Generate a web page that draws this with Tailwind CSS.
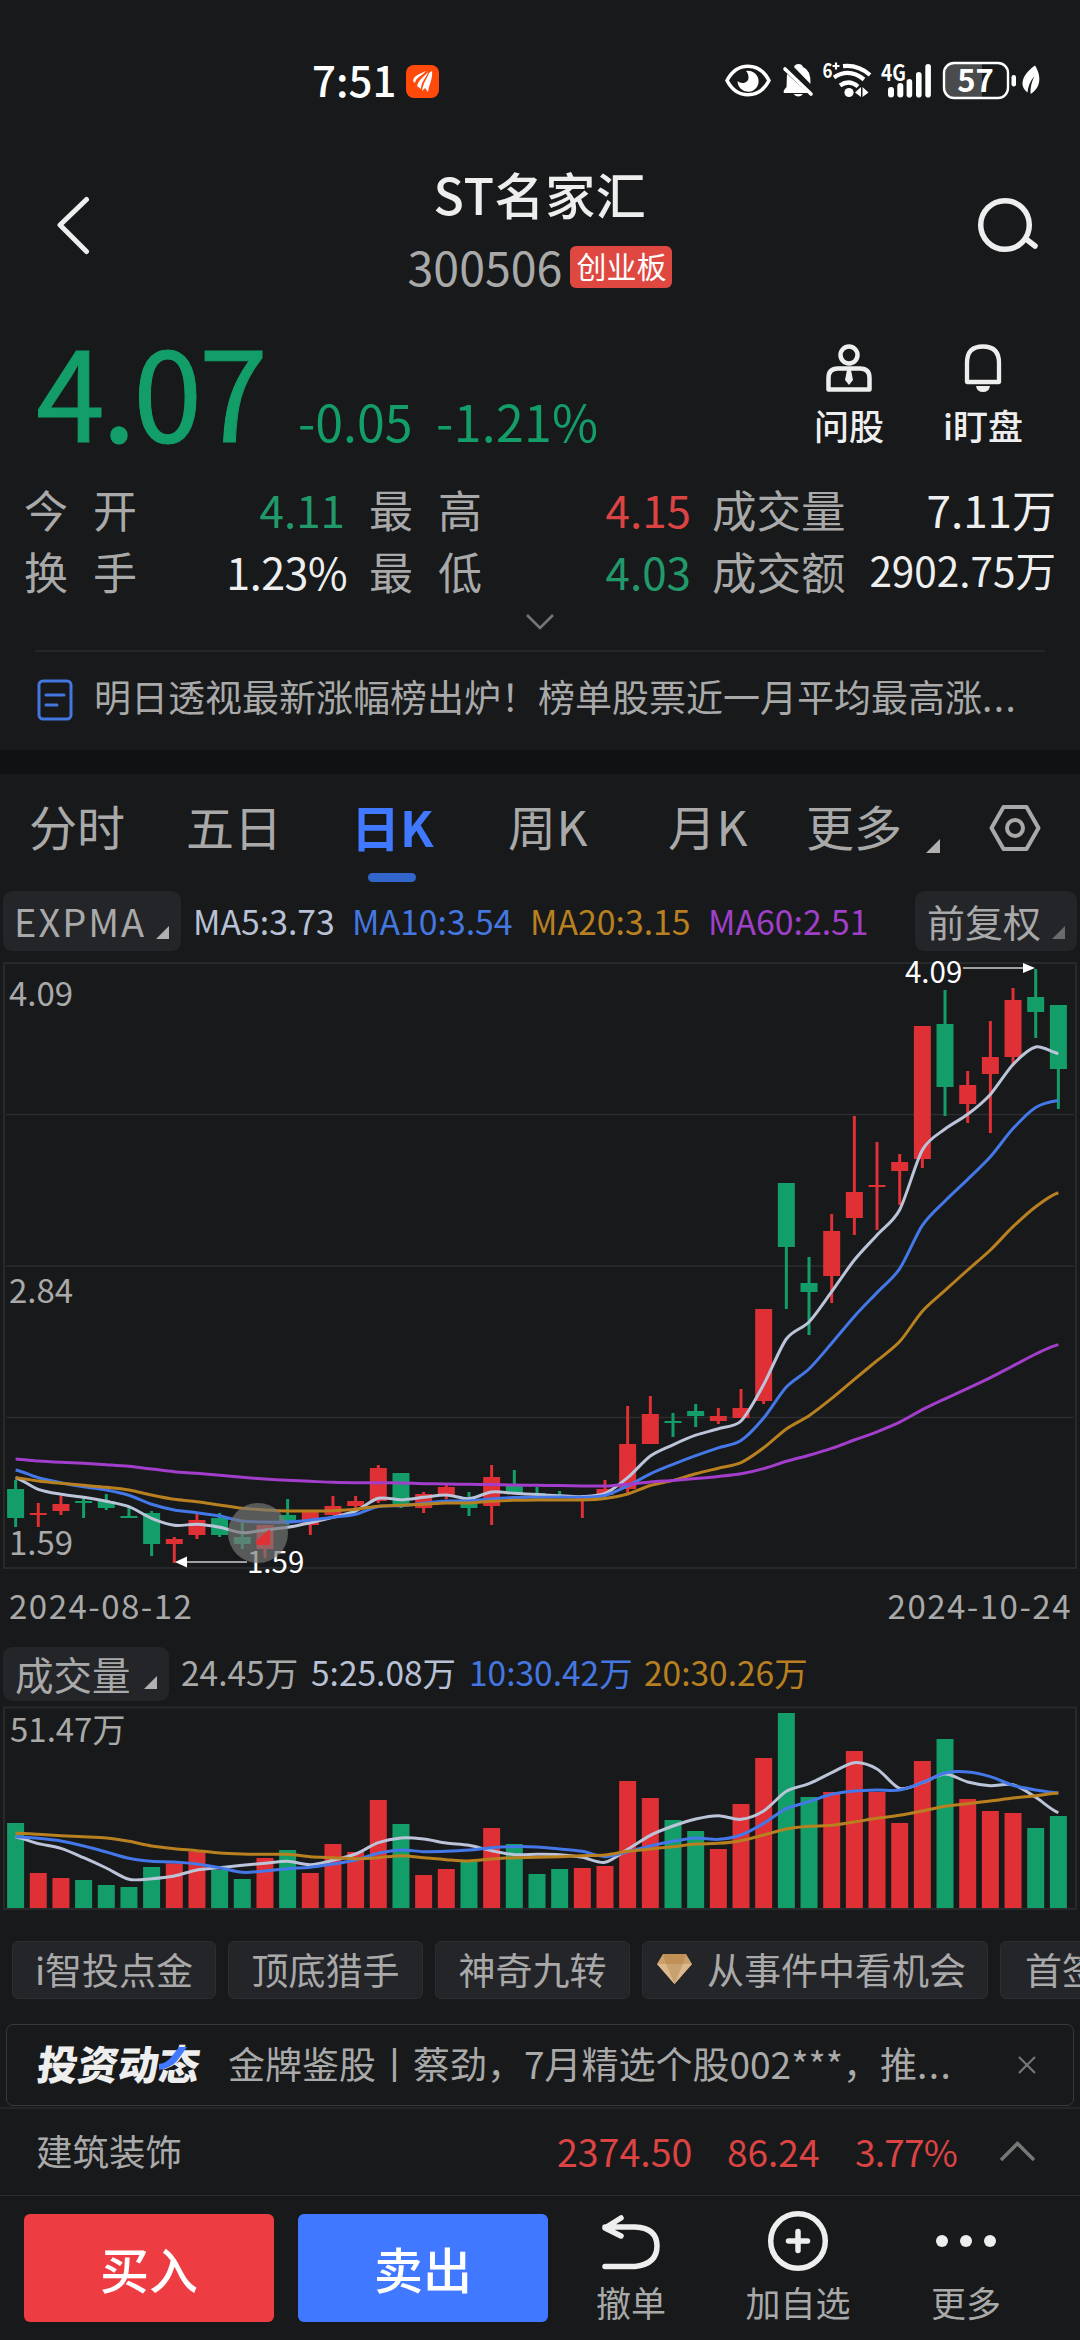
<!DOCTYPE html>
<html lang="zh-CN">
<head>
    <meta charset="UTF-8">
    <meta name="viewport" content="width=device-width, initial-scale=1.0">
    <title>ST名家汇 300506</title>
    <script src="https://cdn.jsdelivr.net/npm/@tailwindcss/browser@4"></script>
</head>
<body class="w-[1080px] h-[2340px] overflow-hidden flex flex-col bg-[#17191a] text-[#a9a9a9] font-['Noto_Sans_CJK_SC',sans-serif] whitespace-nowrap">
    <!-- 状态栏 -->
    <div class="h-[162px] shrink-0 flex items-center pl-[312px] pr-[35px] text-white">
        <span class="text-[42px] font-medium mb-[6px] w-[94px]">7:51</span>
        <svg class="w-[33px] h-[33px]" viewBox="0 0 33 33">
            <rect width="33" height="33" rx="8" fill="#ff4a0c"/>
            <path d="M7 16C8 10 14 9 20 6C16 11 10 12 9 18ZM11 21C13 14 18 12 22 7C20 14 15 16 15 24ZM16 26C17 18 21 14 23 8L26 6C27 14 23 19 22 27L19 23Z" fill="#fff"/>
        </svg>
        <svg class="w-[320px] h-[62px] ml-auto" viewBox="25 0 320 62" fill="#fff">
            <path d="M27 30.5C37 11.5 59 11.5 69 30.5C59 49.500 37 49.500 27 30.5Z" fill="none" stroke="#fff" stroke-width="3.6" stroke-linejoin="round"/>
            <path d="M46 21A10.500 10.500 0 1 1 37.600 31C40 34 48 34 48.500 28C48.500 25 48 23 46 21Z"/>
            <path d="M87 24L108 43H84Q82.500 41 86.500 37Z M94 17Q95 14 98.500 14T103 17Q111 20 110.500 34Z M93.500 44H103Q98.500 49 93.500 44Z"/>
            <path d="M85 19L111 44" stroke="#fff" stroke-width="3.600" stroke-linecap="round"/>
            <text x="122.500" y="27.500" font-size="20" font-weight="700" textLength="10" lengthAdjust="spacingAndGlyphs">6</text>
            <path d="M132.500 16H139.500M136 12.500V19.500" stroke="#fff" stroke-width="2.200"/>
            <g fill="none" stroke="#fff" stroke-width="4.200">
                <path d="M143 16.200Q158 14.500 170 25"/>
                <path d="M134 27.500Q149 17.500 164 29.500"/>
                <path d="M140 35.500Q149 29 158 36.500"/>
            </g>
            <circle cx="149" cy="42.500" r="4.600"/>
            <path d="M155 42.500L161 37V47ZM168.500 42.500L162.500 37V47Z"/>
            <text x="181" y="30.500" font-size="22" font-weight="700" textLength="25" lengthAdjust="spacingAndGlyphs">4G</text>
            <rect x="188" y="37" width="6" height="10.500" rx="3"/>
            <rect x="197.300" y="33" width="6" height="14.500" rx="3"/>
            <rect x="206.600" y="29" width="5.600" height="18.500" rx="2.800"/>
            <rect x="216" y="22" width="5.600" height="25.500" rx="2.800"/>
            <rect x="225.300" y="14" width="5.600" height="33.500" rx="2.800"/>
            <path d="M254 13H282V48H254Q244 48 244 38V23Q244 13 254 13Z" fill="#4a4b4d"/>
            <rect x="244" y="13" width="64" height="35" rx="10" fill="none" stroke="#fff" stroke-width="2.400"/>
            <text x="275.500" y="42" font-size="31" font-weight="700" text-anchor="middle">57</text>
            <rect x="311.500" y="25" width="4.500" height="11.500" rx="2.200"/>
            <path d="M335 15.500C341 25 342 37 330.500 44C330 37 332 31 334.500 26C330 31 328 37 327.500 42.500C318 35 323 24 335 15.500Z"/>
        </svg>
    </div>

    <!-- 标题 -->
    <div class="h-[126px] shrink-0 relative flex justify-center">
        <svg class="absolute left-[54px] top-[33px] w-[40px] h-[60px]" viewBox="0 0 40 60" fill="none" stroke="#eee" stroke-width="5" stroke-linecap="round" stroke-linejoin="round"><path d="M32.500 4.500L6 30L32.500 56.500"/></svg>
        <div class="flex flex-col items-center">
            <div class="h-[60px] leading-[62px] text-[50px] tracking-[0.600px] font-medium text-[#eee]">ST名家汇</div>
            <div class="mt-[21px] h-[45px] flex items-center gap-[8px]">
                <span class="text-[46.500px] leading-[45px]">300506</span>
                <span class="mt-[3px] w-[102px] h-[42px] leading-[38px] rounded-[6px] bg-[#df4741] text-white text-[30px] text-center">创业板</span>
            </div>
        </div>
        <svg class="absolute left-[974px] top-[33px] w-[66px] h-[60px]" viewBox="974 195 66 60" fill="none" stroke="#eee" stroke-width="5.500" stroke-linecap="round"><circle cx="1005" cy="225" r="24.300"/><path d="M1026 239L1035 246"/></svg>
    </div>

    <!-- 最新价 -->
    <div class="h-[190px] shrink-0 flex justify-between pl-[36px] pr-[51px] text-[#139e69]">
        <div class="flex items-baseline pt-[38px]">
            <span class="text-[124px] leading-[124px] tracking-[-3px] w-[262px] [-webkit-text-stroke:1px_#139e69]">4.07</span>
            <span class="text-[50px] w-[138px]">-0.05</span>
            <span class="text-[50px] tracking-[0.300px]">-1.21%</span>
        </div>
        <div class="flex text-[#eee] text-[35px] font-medium pt-[54px]">
            <div class="w-[92px] flex flex-col items-center">
                <svg class="w-[50px] h-[52px]" viewBox="0 0 50 52" fill="none" stroke="#eee" stroke-width="4.500" stroke-linejoin="round">
                    <circle cx="25" cy="13" r="8.500"/>
                    <path d="M4.500 47.500V36Q4.500 26.500 14 26.500H36Q45.500 26.500 45.500 36V47.500Z"/>
                    <path d="M23 28H27L29 38L25 43L21 38Z" fill="#eee" stroke="none"/>
                </svg>
                <span class="leading-[36px] mt-[13px]">问股</span>
            </div>
            <div class="w-[92px] ml-[42px] flex flex-col items-center">
                <svg class="w-[50px] h-[52px]" viewBox="0 0 50 52" fill="none" stroke="#eee" stroke-width="4.300" stroke-linejoin="round">
                    <path d="M9 40V21Q9 4.500 25 4.500T41 21V40Z"/>
                    <path d="M18 44H32Q31 50 25 50T18 44Z" fill="#eee" stroke="none"/>
                </svg>
                <span class="leading-[36px] mt-[13px]">i盯盘</span>
            </div>
        </div>
    </div>

    <!-- 行情数据 -->
    <div class="h-[122px] shrink-0 grid grid-cols-[113px_208px_24px_113px_209px_21px_136px_208px] pl-[24px] text-[44px] leading-[62px]">
        <span class="flex justify-between"><i class="not-italic">今</i><i class="not-italic">开</i></span>
        <span class="text-right text-[#22996b]">4.11</span>
        <span></span>
        <span class="flex justify-between"><i class="not-italic">最</i><i class="not-italic">高</i></span>
        <span class="text-right text-[#dc4444]">4.15</span>
        <span></span>
        <span class="text-[44.500px]">成交量</span>
        <span class="text-right text-[#eee]">7.11万</span>
        <span class="flex justify-between"><i class="not-italic">换</i><i class="not-italic">手</i></span>
        <span class="text-right text-[#eee] text-[43px] tracking-[-0.500px] -mr-[2px]">1.23%</span>
        <span></span>
        <span class="flex justify-between"><i class="not-italic">最</i><i class="not-italic">低</i></span>
        <span class="text-right text-[#22996b]">4.03</span>
        <span></span>
        <span class="text-[44.500px]">成交额</span>
        <span class="text-right text-[#eee] text-[40.500px] leading-[59px]">2902.75万</span>
    </div>
    <div class="h-[50px] shrink-0 flex justify-center pt-[13px]">
        <svg class="w-[30px] h-[18px]" viewBox="0 0 30 18" fill="none" stroke="#777" stroke-width="2.600"><path d="M2 2L15 15L28 2"/></svg>
    </div>

    <!-- 资讯 -->
    <div class="h-[100px] shrink-0 mx-[35px] border-t-2 border-[#242627] flex items-center">
        <svg class="ml-[2px] mb-[2px] w-[36px] h-[42px]" viewBox="0 0 36 42" fill="none" stroke="#4577e0" stroke-width="3"><rect x="2" y="2" width="32" height="38" rx="4"/><path d="M9 16H27M9 26H20" stroke-linecap="round"/></svg>
        <span class="ml-[21px] mb-[9px] text-[37px]">明日透视最新涨幅榜出炉！榜单股票近一月平均最高涨<span class="tracking-[1.500px]">...</span></span>
    </div>
    <div class="h-[24px] shrink-0 bg-[#101113]"></div>

    <!-- 周期切换 -->
    <div class="h-[117px] shrink-0 relative flex pl-[29px] text-[48px] leading-[103px]">
        <span class="w-[157px]">分时</span>
        <span class="w-[165px]">五日</span>
        <span class="w-[157px] font-bold text-[#4078ff] text-[49px]">日K</span>
        <span class="w-[160px] tracking-[0.500px]">周K</span>
        <span class="w-[138px] tracking-[0.500px]">月K</span>
        <span class="w-[120px]">更多</span>
        <svg class="mt-[65px] w-[14px] h-[14px]" viewBox="0 0 14 14" fill="#b0b0b0"><path d="M14 0V14H0Z"/></svg>
        <svg class="ml-[49px] mt-[30px] w-[52px] h-[48px]" viewBox="0 0 52 48" fill="none" stroke="#a9a9a9" stroke-width="4" stroke-linejoin="round"><path d="M14.500 3H37.500L49.500 24L37.500 45H14.500L2.500 24Z"/><circle cx="26" cy="24" r="8"/></svg>
        <i class="absolute left-[368px] top-[99px] w-[48px] h-[9px] rounded-full bg-[#3266cc]"></i>
    </div>

    <!-- 均线 -->
    <div class="h-[60px] shrink-0 flex pl-[3px] pr-[3px] text-[33.800px] leading-[59px]">
        <div class="w-[178px] rounded-[9px] bg-[#242529] flex pl-[11px] text-[38px]">
            <span class="w-[142px] tracking-[2px]">EXPMA</span>
            <svg class="mt-[35px] w-[13px] h-[13px]" viewBox="0 0 14 14" fill="#b0b0b0"><path d="M14 0V14H0Z"/></svg>
        </div>
        <span class="ml-[12px] w-[159px] text-[#b9c1d6]">MA5:3.73</span>
        <span class="w-[178px] text-[#4577e0]">MA10:3.54</span>
        <span class="w-[178px] text-[#b98021]">MA20:3.15</span>
        <span class="text-[#a040c8]">MA60:2.51</span>
        <div class="ml-auto w-[162px] rounded-[9px] bg-[#242529] flex pl-[12px] text-[38px]">
            <span class="w-[125px]">前复权</span>
            <svg class="mt-[35px] w-[13px] h-[13px]" viewBox="0 0 14 14" fill="#6b6b6d"><path d="M14 0V14H0Z"/></svg>
        </div>
    </div>

    <!-- K线图 -->
    <svg id="kline" class="w-[1080px] h-[629px] shrink-0" viewBox="0 951 1080 629" fill="none">
        <g stroke="#28292b" stroke-width="2">
            <rect x="4" y="963" width="1072" height="605"/>
            <path d="M6 1114.500H1074M6 1266H1074M6 1417.500H1074" stroke-width="1.500" stroke="#2c2d2f"/>
        </g>
        <g id="candles"></g>
        <g fill="#a9a9a9" font-size="33">
            <text x="9" y="1005.500">4.09</text>
            <text x="9" y="1303">2.84</text>
            <text x="9" y="1554.500">1.59</text>
        </g>
        <g id="maLines" stroke-width="3" stroke-linejoin="round"></g>
        <path d="M963 968H1025M184 1562H247" stroke="#a0a0a0" stroke-width="2"/>
        <path d="M1035 968L1023 963V973ZM175 1562L187 1556.500V1567.500Z" fill="#fff"/>
        <text x="905" y="982.500" font-size="29.500" fill="#fff">4.09</text>
        <text x="247" y="1573" font-size="29.500" fill="#fff">1.59</text>
        <circle cx="258" cy="1533" r="30" fill="#777" fill-opacity=".68"/>
        <path d="M256 1544V1541L270 1529V1545H258Z" fill="#df3035"/>
    </svg>
    <div class="h-[67px] shrink-0 flex justify-between pl-[9px] pr-[8px] text-[33px] leading-[51px] tracking-[1.500px]">
        <span>2024-08-12</span>
        <span>2024-10-24</span>
    </div>

    <!-- 成交量 -->
    <div class="h-[54px] shrink-0 flex pl-[3px] text-[33.500px] leading-[50px]">
        <div class="w-[166px] rounded-[9px] bg-[#242529] flex pl-[12px] text-[38.500px] leading-[52px]">
            <span class="w-[129px]">成交量</span>
            <svg class="mt-[29px] w-[13px] h-[13px]" viewBox="0 0 14 14" fill="#b0b0b0"><path d="M14 0V14H0Z"/></svg>
        </div>
        <span class="ml-[12px] w-[130px]">24.45万</span>
        <span class="w-[158px] text-[#b9c1d6]">5:25.08万</span>
        <span class="w-[175px] text-[#4577e0]">10:30.42万</span>
        <span class="text-[#b98021]">20:30.26万</span>
    </div>
    <svg id="volume" class="w-[1080px] h-[240px] shrink-0" viewBox="0 1701 1080 240" fill="none">
        <rect x="4" y="1707.500" width="1072" height="201.500" stroke="#28292b" stroke-width="2"/>
        <g id="volBars"></g>
        <text x="10" y="1741.500" font-size="33" fill="#a9a9a9">51.47万</text>
        <g id="volLines" stroke-width="3" stroke-linejoin="round"></g>
    </svg>

    <!-- 功能标签 -->
    <div class="h-[58px] w-[1080px] overflow-hidden shrink-0 flex gap-[12px] pl-[12px] text-[37px] leading-[54px]">
        <span class="w-[204px] shrink-0 h-[58px] rounded-[6px] bg-[#242529] border border-[#2c2d30] text-center">i智投点金</span>
        <span class="w-[195px] shrink-0 h-[58px] rounded-[6px] bg-[#242529] border border-[#2c2d30] text-center">顶底猎手</span>
        <span class="w-[195px] shrink-0 h-[58px] rounded-[6px] bg-[#242529] border border-[#2c2d30] text-center">神奇九转</span>
        <span class="w-[346px] shrink-0 h-[58px] rounded-[6px] bg-[#242529] border border-[#2c2d30] flex pl-[14px]">
            <svg class="mt-[12px] mr-[15px] w-[35px] h-[30px]" viewBox="0 0 35 30"><path d="M6 0H29L35 10L17.500 30L0 10Z" fill="#c9a06e"/><path d="M0 10H35L17.500 30Z" fill="#dcb98c"/><path d="M9 10H26L17.500 30Z" fill="#c8a170"/><path d="M6 0H29L26 10H9Z" fill="#c19057"/></svg>
            <span>从事件中看机会</span>
        </span>
        <span class="w-[195px] shrink-0 h-[58px] rounded-[6px] bg-[#242529] border border-[#2c2d30] pl-[24px]">首签</span>
    </div>

    <!-- 投资动态 -->
    <div class="h-[82px] shrink-0 mt-[25px] mx-[6px] rounded-[7px] border border-[#38393b] flex text-[37px] leading-[76px]">
        <div class="relative w-[190px] ml-[31px]">
            <span class="inline-block -skew-x-8 text-[40.500px] leading-[76px] font-black text-[#eee]">投资动态</span>
            <svg class="absolute left-[121px] top-[22px] w-[28px] h-[24px]" viewBox="0 0 28 24"><path d="M20 0H28L18 14Q12 21 0 23V17Q8 16 13 9Z" fill="#4078ff"/></svg>
        </div>
        <span class="w-[790px]">金牌鉴股丨蔡劲，7月精选个股002***，推<span class="tracking-[1.500px]">...</span></span>
        <svg class="mt-[31px] w-[18px] h-[18px]" viewBox="0 0 18 18" stroke="#777" stroke-width="2.200"><path d="M1 1L17 17M17 1L1 17"/></svg>
    </div>

    <!-- 板块 -->
    <div class="h-[88px] shrink-0 mt-px border-t-2 border-[#242627] flex pl-[36px] text-[36.500px] leading-[84px]">
        <span class="w-[521px]">建筑装饰</span>
        <span class="w-[170px] text-[37.500px] text-[#dc4444]">2374.50</span>
        <span class="w-[128px] text-[37px] text-[#dc4444]">86.24</span>
        <span class="w-[144px] text-[37px] tracking-[-0.800px] text-[#dc4444]">3.77%</span>
        <svg class="mt-[31px] w-[37px] h-[22px]" viewBox="0 0 37 22" fill="none" stroke="#777" stroke-width="3.500"><path d="M2 20L18.500 3.500L35 20"/></svg>
    </div>

    <!-- 底部操作 -->
    <div class="h-[145px] shrink-0 border-t border-[#2a2b2d] flex pl-[24px] pt-[18px] text-[35px]">
        <button class="w-[250px] h-[108px] rounded-[6px] bg-[#ee3d42] text-white text-[49px] leading-[102px] font-medium">买入</button>
        <button class="ml-[24px] w-[250px] h-[108px] rounded-[6px] bg-[#4078ff] text-white text-[49px] leading-[102px] font-medium">卖出</button>
        <div class="ml-[30px] w-[106px] flex flex-col items-center">
            <svg class="w-[64px] h-[62px]" viewBox="0 0 64 62" fill="none" stroke="#eee" stroke-width="5.500" stroke-linecap="round" stroke-linejoin="round"><path d="M22 4L6 14L22 22M6 13H36Q58 14 58 32T36 52.500H6"/></svg>
            <span class="leading-[52px]">撤单</span>
        </div>
        <div class="ml-[60px] w-[108px] flex flex-col items-center">
            <svg class="w-[64px] h-[62px] mt-[-4px]" viewBox="0 0 64 62" fill="none" stroke="#eee" stroke-width="5.500" stroke-linecap="round"><circle cx="32" cy="31" r="27.300"/><path d="M22.500 31H41.500M32 21.500V40.500"/></svg>
            <span class="leading-[52px] mt-[4px]">加自选</span>
        </div>
        <div class="ml-[60px] w-[108px] flex flex-col items-center">
            <svg class="w-[64px] h-[62px]" viewBox="0 0 64 62" fill="#eee"><circle cx="8" cy="27" r="6"/><circle cx="32" cy="27" r="6"/><circle cx="56" cy="27" r="6"/></svg>
            <span class="leading-[52px]">更多</span>
        </div>
    </div>

    <script>
        const RED = "#df3035";
        const GREEN = "#139e69";
        const STEP = 22.669;
        const START = 15.6;
        const x = i => START + i * STEP;

        // [涨跌, 实体上, 实体下, 影线上, 影线下, 量柱上]
        const bars = [
            [0, 1489, 1518, 1480, 1527, 549], [1, 1513, 1515, 1503, 1527, 699], [1, 1504, 1511, 1496, 1515, 714],
            [0, 1501, 1503, 1497, 1518, 720], [0, 1501, 1508, 1494, 1510, 735], [0, 1516, 1518, 1506, 1518, 741],
            [0, 1513, 1544, 1511, 1556, 681], [1, 1539, 1544, 1537, 1563, 670], [1, 1520, 1535, 1514, 1539, 634],
            [0, 1518, 1535, 1513, 1537, 690], [0, 1537, 1544, 1522, 1549, 717], [1, 1525, 1549, 1525, 1558, 654],
            [0, 1515, 1521, 1499, 1525, 630], [1, 1510, 1525, 1510, 1535, 699], [1, 1506, 1515, 1496, 1515, 612],
            [1, 1501, 1506, 1496, 1508, 636], [1, 1468, 1501, 1465, 1503, 480], [0, 1473, 1506, 1473, 1508, 552],
            [1, 1494, 1508, 1492, 1513, 705], [1, 1487, 1496, 1484, 1499, 687], [0, 1499, 1508, 1492, 1516, 666],
            [1, 1477, 1506, 1465, 1525, 564], [0, 1485, 1493, 1470, 1494, 612], [0, 1493, 1495, 1487, 1495, 702],
            [0, 1495, 1497, 1491, 1497, 687], [1, 1498, 1500, 1497, 1518, 684], [1, 1489, 1495, 1480, 1495, 678],
            [1, 1444, 1489, 1406, 1493, 423], [1, 1414, 1444, 1396, 1444, 474], [0, 1421, 1423, 1413, 1437, 540],
            [0, 1411, 1416, 1404, 1427, 573], [1, 1416, 1421, 1408, 1424, 627], [1, 1408, 1418, 1389, 1418, 492],
            [1, 1309, 1401, 1309, 1404, 354], [0, 1183, 1247, 1183, 1309, 219], [0, 1283, 1292, 1257, 1335, 471],
            [1, 1231, 1276, 1214, 1303, 456], [1, 1192, 1218, 1116, 1235, 333], [1, 1185, 1187, 1142, 1230, 456],
            [1, 1162, 1171, 1154, 1205, 549], [1, 1026, 1159, 1026, 1168, 363], [0, 1024, 1087, 990, 1116, 297],
            [1, 1085, 1104, 1071, 1123, 477], [1, 1057, 1074, 1021, 1133, 513], [1, 1000, 1057, 988, 1066, 519],
            [0, 997, 1012, 969, 1038, 564], [0, 1005, 1069, 1005, 1109, 528]
        ];

        const ma = {
            "#bcc4da": [1477.7,1489.3,1494.3,1497.3,1501.3,1506.7,1518.3,1525.3,1524.3,1527.3,1532.7,1530,1527.3,1522.7,1517.3,1511,1498.3,1499.7,1497.3,1495,1498.7,1492,1493.3,1494.5,1495.8,1496.6,1493.5,1477.7,1456,1444.8,1435.2,1428.7,1421,1384.5,1339,1322,1291.7,1260,1235,1209.7,1150,1129,1114.3,1094.4,1064.5,1047,1053.6],
            "#4478e8": [1470,1477.7,1482.7,1486.7,1490,1495.3,1504.3,1510,1512.7,1516,1521,1522,1522,1520,1517.3,1514.3,1506.5,1505.7,1503.3,1501,1501,1498.7,1497.5,1497.3,1497,1497.3,1495.5,1486,1473.8,1464.3,1455.6,1447.8,1440.5,1418,1387,1369,1343.3,1316.4,1292.6,1268.7,1225.4,1201,1179.4,1156.8,1128.6,1107.4,1100.5],
            "#b98020": [1477.7,1481,1483.3,1485.3,1487.3,1490,1495,1499.3,1501.7,1505,1508.3,1510,1511,1511,1510.7,1509.3,1506.3,1505.3,1504.3,1503,1503,1501.3,1500.3,1500,1500,1500,1498.5,1494,1485.5,1480.4,1473.8,1468.2,1462.6,1447.8,1429,1415.7,1398.4,1379.3,1360.7,1341.6,1311.2,1290.4,1270,1250,1226.7,1206.7,1192.8],
            "#a23ecb": [1459,1461,1462.3,1463.3,1464.7,1466.3,1469,1471.7,1473.3,1475.3,1477.3,1479,1480.3,1481.3,1482.3,1482.7,1482.7,1483,1483.7,1484,1484.3,1484.6,1485,1485.3,1485.6,1486,1486,1484.3,1482,1480.4,1478.6,1476.5,1473.8,1468.6,1461.3,1455.2,1448.3,1440,1431.8,1422.2,1409.7,1398.8,1388.4,1377.6,1365.9,1354,1344.6]
        };

        const volMa = {
            "#bcc4da": [591,611,625,653,684,718,716,708,690,683,676,670,664,674,661,642,608,594,597,609,616,632,644,643,644,652,667,628,586,558,537,527,538,513,454,431,398,368,387,445,428,402,426,437,434,472,518],
            "#4478e8": [590,595,603,618,636,655,664,666,672,683,697,693,686,682,672,660,640,630,635,634,630,623,620,621,627,634,650,635,618,604,594,598,585,550,506,485,463,453,450,450,428,399,396,410,436,450,459],
            "#b98020": [580,583,587,590,594,604,618,626,632,639,642,643,643,650,653,656,653,647,653,659,663,657,653,652,650,647,645,634,627,620,612,610,602,585,567,559,556,546,535,526,513,499,491,483,474,467,459]
        };
        const volY = v => 1640 + v / 3;

        // 平滑曲线
        function curve(ys) {
            let d = `M${x(0)} ${ys[0]}`;
            for (let i = 1; i < ys.length; i++) {
                const before = ys[i - 2] ?? ys[i - 1];
                const after = ys[i + 1] ?? ys[i];
                const c1 = ys[i - 1] + (ys[i] - before) / 7;
                const c2 = ys[i] - (after - ys[i - 1]) / 7;
                d += `C${x(i - 1) + STEP / 3.5} ${c1} ${x(i) - STEP / 3.5} ${c2} ${x(i)} ${ys[i]}`;
            }
            return d;
        }

        document.getElementById("candles").innerHTML = bars.map(([up, top, bottom, high, low], i) => {
            const color = up ? RED : GREEN;
            return `<rect x="${x(i) - 1.5}" y="${high}" width="3" height="${low - high}" fill="${color}"/>
                <rect x="${x(i) - 8.5}" y="${top}" width="17" height="${bottom - top}" fill="${color}"/>`;
        }).join("");

        document.getElementById("volBars").innerHTML = bars.map(([up, , , , , v], i) =>
            `<rect x="${x(i) - 8.5}" y="${volY(v)}" width="17" height="${1908 - volY(v)}" fill="${up ? RED : GREEN}"/>`
        ).join("");

        document.getElementById("maLines").innerHTML = Object.entries(ma).map(([color, ys]) =>
            `<path d="${curve(ys)}" stroke="${color}"/>`
        ).join("");

        document.getElementById("volLines").innerHTML = Object.entries(volMa).map(([color, ys]) =>
            `<path d="${curve(ys.map(volY))}" stroke="${color}"/>`
        ).join("");
    </script>
</body>
</html>
